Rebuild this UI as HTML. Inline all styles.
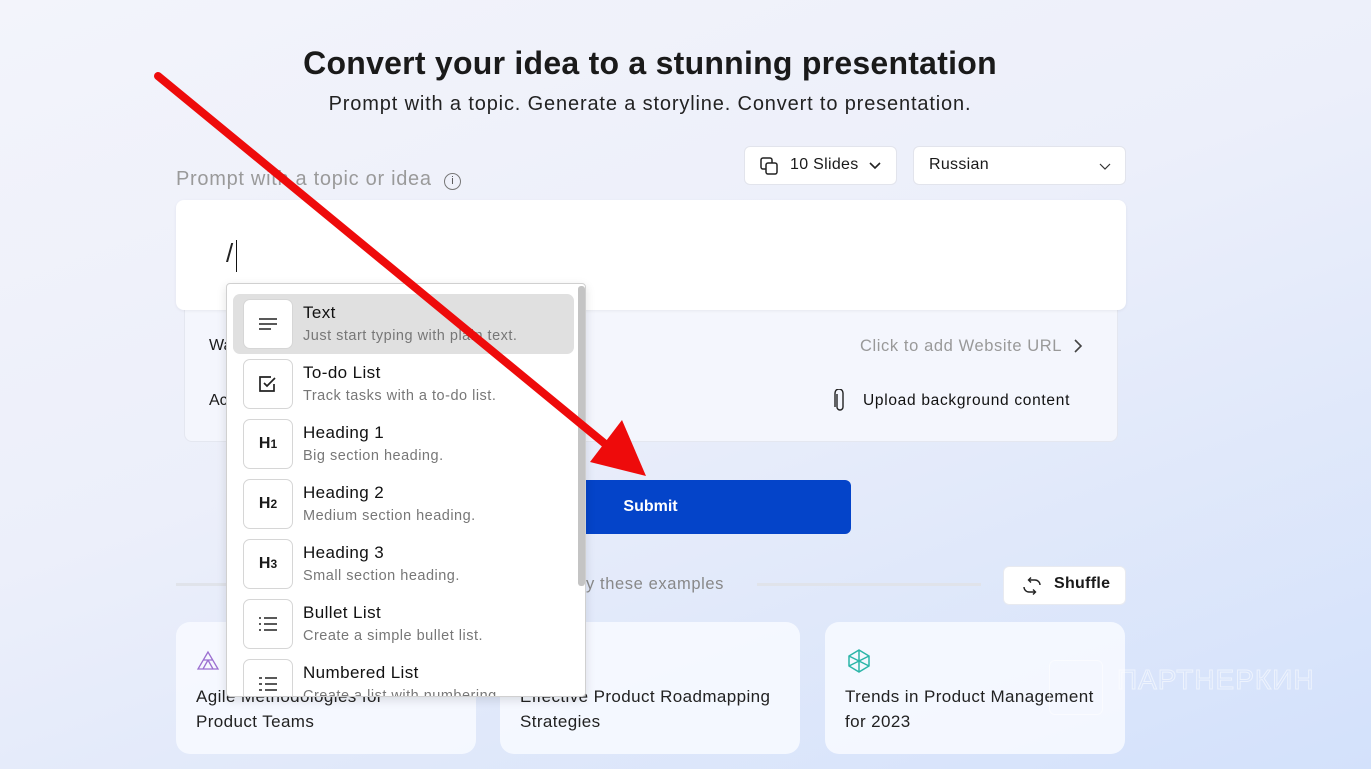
<!DOCTYPE html>
<html><head><meta charset="utf-8"><style>
*{margin:0;padding:0;box-sizing:border-box}
body{width:1371px;height:769px;overflow:hidden;font-family:"Liberation Sans",sans-serif;background:linear-gradient(160deg,#f3f4fb 0%,#eceffa 45%,#d3e1fb 100%);position:relative;color:#1a1a1a}
.a{position:absolute}
.h1{left:0;width:1300px;text-align:center;top:45px;font-size:32px;font-weight:bold;color:#1a1a1a;letter-spacing:.25px}
.sub{left:0;width:1300px;text-align:center;top:93px;font-size:20px;color:#222;letter-spacing:.85px}
.btn{background:#fff;border:1px solid #e2e4ec;border-radius:6px;font-size:16px;letter-spacing:.3px}
.item{position:absolute;left:6px;width:341px;height:60px}
.ib{position:absolute;left:10px;top:5px;width:50px;height:50px;border:1px solid #d6d6d6;border-radius:7px;background:#fff;display:flex;align-items:center;justify-content:center;font-size:16px;font-weight:bold}
.t{position:absolute;left:70px;top:9px;font-size:17px;color:#111;letter-spacing:.4px}
.d{position:absolute;left:70px;top:34px;font-size:14.5px;color:#777;letter-spacing:.5px}
.card{background:rgba(248,250,255,.85);border-radius:14px;width:300px;height:132px;top:622px;font-size:17px;line-height:25px;color:#222;padding:62px 20px 0;letter-spacing:.4px}
</style></head><body>
<div class="a h1">Convert your idea to a stunning presentation</div>
<div class="a sub">Prompt with a topic. Generate a storyline. Convert to presentation.</div>
<div class="a" style="left:176px;top:168px;font-size:20px;color:#9a9a9a;letter-spacing:.7px">Prompt with a topic or idea <span style="display:inline-block;width:17px;height:17px;border:1.5px solid #777;border-radius:50%;font-size:11px;text-align:center;line-height:14px;color:#555;margin-left:6px;vertical-align:1px;letter-spacing:0">i</span></div>
<div class="a btn" style="left:744px;top:146px;width:153px;height:39px">
<svg class="a" style="left:14px;top:9px" width="20" height="20" viewBox="0 0 20 20" fill="none" stroke="#222" stroke-width="1.5"><rect x="2" y="2" width="11" height="11" rx="2"/><rect x="7" y="7" width="11" height="11" rx="2" fill="#fff"/></svg>
<span class="a" style="left:45px;top:9px">10 Slides</span>
<svg class="a" style="left:124px;top:14px" width="12" height="10" viewBox="0 0 12 10"><path d="M1 2l5 5 5-5" stroke="#222" stroke-width="1.6" fill="none"/></svg></div>
<div class="a btn" style="left:913px;top:146px;width:213px;height:39px"><span class="a" style="left:15px;top:9px">Russian</span>
<svg class="a" style="left:185px;top:15px" width="12" height="10" viewBox="0 0 12 10"><path d="M1 2l5 5 5-5" stroke="#333" stroke-width="1.2" fill="none"/></svg></div>
<div class="a" style="left:184px;top:300px;width:934px;height:142px;background:#f4f6fd;border:1px solid #e4e7f0;border-radius:8px"></div>
<div class="a" style="left:176px;top:200px;width:950px;height:110px;background:#fff;border-radius:8px;box-shadow:0 1px 3px rgba(0,0,0,.06)"></div>
<div class="a" style="left:226px;top:238px;font-size:26px;color:#222">/</div>
<div class="a" style="left:236px;top:240px;width:1px;height:32px;background:#111"></div>
<div class="a" style="left:209px;top:337px;font-size:16px">Wa</div>
<div class="a" style="left:209px;top:392px;font-size:16px">Ac</div>
<div class="a" style="left:860px;top:337px;font-size:16.5px;color:#999;letter-spacing:.6px">Click to add Website URL</div>
<svg class="a" style="left:1073px;top:338px" width="10" height="16" viewBox="0 0 10 16"><path d="M2 2l6 6-6 6" stroke="#444" stroke-width="1.6" fill="none"/></svg>
<svg class="a" style="left:832px;top:389px" width="16" height="24" viewBox="0 0 16 24" fill="none" stroke="#222" stroke-width="1.4"><path d="M5 5v13a3 3 0 006 0V4a4 4 0 00-8 0v14"/></svg>
<div class="a" style="left:863px;top:392px;font-size:15.5px;color:#111;letter-spacing:.7px">Upload background content</div>
<div class="a" style="left:450px;top:480px;width:401px;height:54px;background:#0444c9;border-radius:6px;color:#fff;font-weight:bold;font-size:16px;text-align:center;line-height:54px">Submit</div>
<div class="a" style="left:176px;top:583px;width:400px;height:3px;background:#e0e3ea"></div>
<div class="a" style="left:757px;top:583px;width:224px;height:3px;background:#e0e3ea"></div>
<div class="a" style="left:586px;top:575px;font-size:16.5px;color:#888;letter-spacing:.6px">y these examples</div>
<div class="a btn" style="left:1003px;top:566px;width:123px;height:39px;border-color:#e8eaf0"><svg class="a" style="left:16px;top:9px" width="24" height="20" viewBox="0 0 24 20" fill="none" stroke="#222" stroke-width="1.4"><path d="M9 4h6a5 5 0 015 5M15 16H9a5 5 0 01-5-5"/><path d="M11 1.5L8.5 4 11 6.5M13 13.5l2.5 2.5-2.5 2.5"/></svg><span class="a" style="left:50px;top:8px;font-weight:bold;font-size:16px">Shuffle</span></div>
<div class="a card" style="left:176px"><svg class="a" style="left:20px;top:28px" width="24" height="22" viewBox="0 0 24 22" fill="none" stroke="#9b6fd0" stroke-width="1.3"><path d="M12 2L2 19h20zM7 10h10M12 10l-5 9M12 10l5 9"/></svg>Agile Methodologies for<br>Product Teams</div>
<div class="a card" style="left:500px">Effective Product Roadmapping<br>Strategies</div>
<div class="a card" style="left:825px"><svg class="a" style="left:22px;top:26px" width="24" height="26" viewBox="0 0 24 26" fill="none" stroke="#2bb5a8" stroke-width="1.5"><path d="M12 2l10 6v10l-10 6-10-6V8z M12 2v22M2 8l20 10M22 8L2 18"/></svg>Trends in Product Management<br>for 2023</div>
<div class="a" style="left:1049px;top:660px;width:54px;height:55px;border:1.5px solid rgba(255,255,255,.5);border-radius:6px"></div>
<div class="a" style="left:1117px;top:664px;font-size:28px;letter-spacing:1px;color:transparent;-webkit-text-stroke:1px rgba(255,255,255,.55)">ПАРТНЕРКИН</div>
<div class="a" style="left:226px;top:283px;width:360px;height:414px;background:#fff;border:1px solid #d0d0d0;border-radius:4px;box-shadow:0 3px 10px rgba(0,0,0,.12);overflow:hidden">
<div class="a" style="left:351px;top:2px;width:7px;height:300px;background:#c4c4c4;border-radius:3px"></div>
<div class="item" style="top:10px;background:#e0e0e0;border-radius:7px"><div class="ib"><svg width="20" height="14" viewBox="0 0 20 14" stroke="#222" stroke-width="1.6"><path d="M1 2h18M1 7h18M1 12h12"/></svg></div><div class="t">Text</div><div class="d">Just start typing with plain text.</div></div>
<div class="item" style="top:70px"><div class="ib"><svg width="22" height="22" viewBox="0 0 22 22" fill="none" stroke="#222" stroke-width="1.7"><path d="M17 11v7H3V4h11"/><path d="M7 10l3 3 8-8"/></svg></div><div class="t">To-do List</div><div class="d">Track tasks with a to-do list.</div></div>
<div class="item" style="top:130px"><div class="ib">H<span style="font-size:12px">1</span></div><div class="t">Heading 1</div><div class="d">Big section heading.</div></div>
<div class="item" style="top:190px"><div class="ib">H<span style="font-size:12px">2</span></div><div class="t">Heading 2</div><div class="d">Medium section heading.</div></div>
<div class="item" style="top:250px"><div class="ib">H<span style="font-size:12px">3</span></div><div class="t">Heading 3</div><div class="d">Small section heading.</div></div>
<div class="item" style="top:310px"><div class="ib"><svg width="20" height="16" viewBox="0 0 20 16" stroke="#222" stroke-width="1.6"><path d="M6 2h13M6 8h13M6 14h13M1 2h2M1 8h2M1 14h2"/></svg></div><div class="t">Bullet List</div><div class="d">Create a simple bullet list.</div></div>
<div class="item" style="top:370px"><div class="ib"><svg width="20" height="16" viewBox="0 0 20 16" stroke="#222" stroke-width="1.6"><path d="M7 2h12M7 8h12M7 14h12M1 2h3M1 8h3M1 14h3"/></svg></div><div class="t">Numbered List</div><div class="d">Create a list with numbering.</div></div>
</div>
<svg class="a" style="left:0;top:0" width="1371" height="769"><line x1="158" y1="76" x2="615" y2="452" stroke="#ee0b0b" stroke-width="8" stroke-linecap="round"/><path d="M646 476L590 462L622 420Z" fill="#ee0b0b"/></svg>
</body></html>
